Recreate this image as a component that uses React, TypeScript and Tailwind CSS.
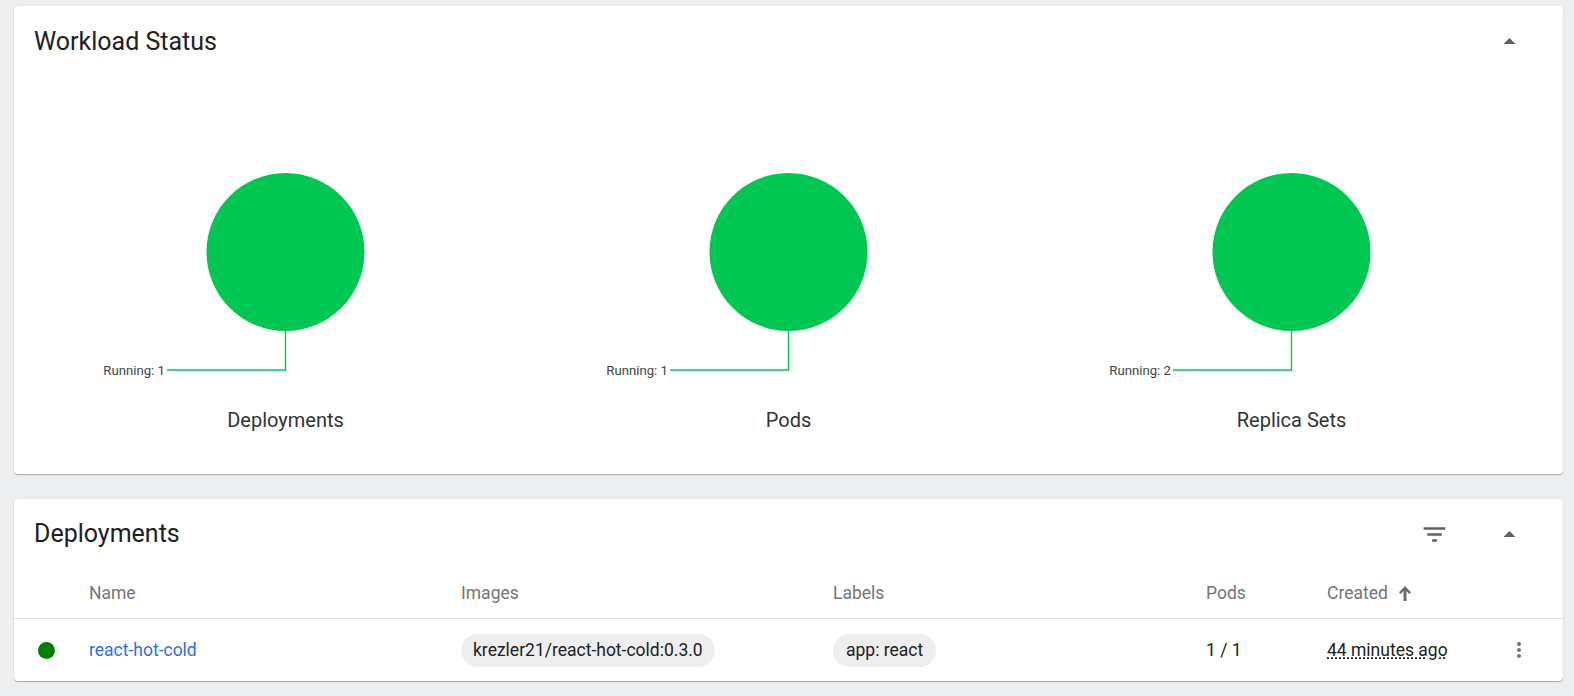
import React from 'react'

const charts = [
  { label: 'Deployments', running: 1 },
  { label: 'Pods', running: 1 },
  { label: 'Replica Sets', running: 2 },
]

function ArrowDropUp() {
  return (
    <svg width="29" height="29" viewBox="0 0 24 24" fill="#616161">
      <path d="M7 14l5-5 5 5z" />
    </svg>
  )
}

function StatusChart({ label, running }: { label: string; running: number }) {
  return (
    <div className="flex flex-col items-center">
      <svg width="503" height="320" viewBox="0 0 503 320" className="block">
        <circle cx="251.5" cy="175" r="79" fill="#00c752" />
        <polyline
          points="251.5,254 251.5,293 133,293"
          fill="none"
          stroke="#00c752"
          strokeWidth="1.4"
        />
        <text
          x="131"
          y="297.5"
          textAnchor="end"
          fontSize="13.2"
          fill="#444444"
          fontFamily="Roboto, sans-serif"
        >
          Running: {running}
        </text>
      </svg>
      <p className="mt-[9px] text-[20px] leading-[28px] text-[#333333]">{label}</p>
    </div>
  )
}

export default function App() {
  return (
    <div
      className="min-h-screen bg-[#edeef0] pl-[14px] pr-[11px] pt-[6px] pb-4"
      style={{ fontFamily: 'Roboto, "Liberation Sans", sans-serif' }}
    >
      {/* Workload status */}
      <div className="rounded-[4px] bg-white shadow-[0_1px_1px_rgba(0,0,0,0.28),0_0_2px_rgba(0,0,0,0.08)]">
        <div className="flex h-[71px] items-center justify-between pl-[20px] pr-[30px]">
          <h2 className="text-[25px] text-[#212121]">Workload Status</h2>
          <button className="flex h-12 w-12 items-center justify-center">
            <ArrowDropUp />
          </button>
        </div>
        <div className="grid grid-cols-3 px-[20px] pb-[40px]">
          {charts.map((c) => (
            <StatusChart key={c.label} label={c.label} running={c.running} />
          ))}
        </div>
      </div>

      {/* Deployments */}
      <div className="mt-[25px] rounded-[4px] bg-white shadow-[0_1px_1px_rgba(0,0,0,0.28),0_0_2px_rgba(0,0,0,0.08)]">
        <div className="flex h-[70px] items-center justify-between pl-[20px] pr-[30px]">
          <h2 className="text-[25px] text-[#212121]">Deployments</h2>
          <div className="flex items-center gap-[27px]">
            <button className="flex h-12 w-12 items-center justify-center">
              <svg width="29" height="29" viewBox="0 0 24 24" fill="#616161">
                <path d="M10 18h4v-2h-4v2zM3 6v2h18V6H3zm3 7h12v-2H6v2z" />
              </svg>
            </button>
            <button className="flex h-12 w-12 items-center justify-center">
              <ArrowDropUp />
            </button>
          </div>
        </div>

        <div className="grid h-[50px] grid-cols-[75px_372px_372px_373px_121px_1fr_48px] items-center border-b border-[#e0e0e0] pr-[20px] text-[17.5px] text-[#757575]">
          <div />
          <div>Name</div>
          <div>Images</div>
          <div>Labels</div>
          <div>Pods</div>
          <div className="flex items-center gap-[11px]">
            Created
            <svg width="12" height="15" viewBox="0 0 12 15" fill="#6b6b6b">
              <path d="M6 0L12 6.3L10.3 7.9L7.5 5V15H4.5V5L1.7 7.9L0 6.3Z" />
            </svg>
          </div>
          <div />
        </div>

        <div className="grid h-[62px] grid-cols-[75px_372px_372px_373px_121px_1fr_48px] items-center pr-[20px] text-[17.5px] text-[#212121]">
          <div className="pl-[24px]">
            <div className="h-[17px] w-[17px] rounded-full bg-[#008000]" />
          </div>
          <div className="text-[#326de6]">react-hot-cold</div>
          <div>
            <span className="inline-flex h-[33px] items-center rounded-full bg-[#eeeeee] px-[12px]">
              krezler21/react-hot-cold:0.3.0
            </span>
          </div>
          <div>
            <span className="inline-flex h-[33px] items-center rounded-full bg-[#eeeeee] px-[13px]">
              app: react
            </span>
          </div>
          <div>1 / 1</div>
          <div>
            <span className="underline decoration-dotted decoration-[#212121] underline-offset-[2px]">
              44 minutes ago
            </span>
          </div>
          <div className="flex justify-center">
            <svg width="24" height="24" viewBox="0 0 24 24" fill="#757575">
              <path d="M12 8c1.1 0 2-.9 2-2s-.9-2-2-2-2 .9-2 2 .9 2 2 2zm0 2c-1.1 0-2 .9-2 2s.9 2 2 2 2-.9 2-2-.9-2-2-2zm0 6c-1.1 0-2 .9-2 2s.9 2 2 2 2-.9 2-2-.9-2-2-2z" />
            </svg>
          </div>
        </div>
      </div>
    </div>
  )
}
